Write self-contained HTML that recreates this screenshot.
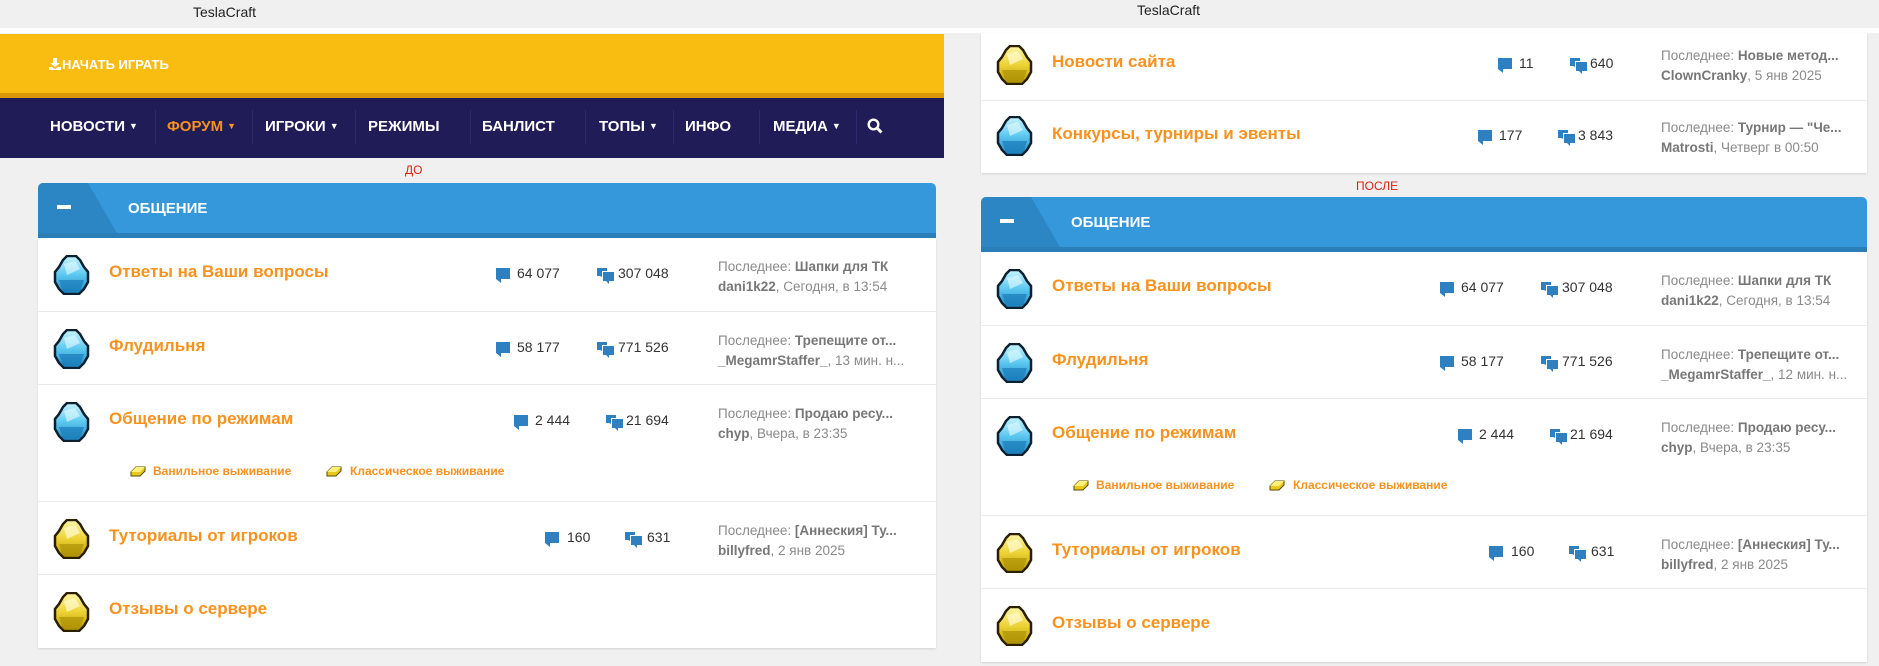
<!DOCTYPE html>
<html><head><meta charset="utf-8">
<style>
*{margin:0;padding:0;box-sizing:border-box}
body{width:1879px;height:666px;background:#f0f0f0;position:relative;overflow:hidden;font-family:"Liberation Sans",sans-serif}
.a{position:absolute}
.tc{font-size:14px;color:#222;top:4px}
.nav{left:0;top:98px;width:944px;height:60px;background:#201c58}
.ni{position:absolute;top:0;height:56px;display:flex;align-items:center;color:#fff;font-weight:bold;font-size:15px;white-space:nowrap}
.ni .c{font-size:9px;margin-left:4px}
.sep{position:absolute;top:12px;width:1px;height:34px;background:#2e2a6c}
.box{background:#fff;box-shadow:0 1px 2px rgba(0,0,0,.12)}
.row{position:absolute;left:0;right:0;border-bottom:1px solid #e9e9e9}
.row:last-child{border-bottom:none}
.gem{position:absolute;left:15px;top:17px}
.t{position:absolute;left:71px;top:24px;font-size:17px;font-weight:bold;color:#f7921e;white-space:nowrap}
.s{position:absolute;top:27px;font-size:14px;color:#333;white-space:nowrap}
.ic{position:absolute;top:30px}
.l{position:absolute;left:680px;top:19px;font-size:13.5px;color:#8a8a8a;line-height:20px;white-space:nowrap}
.l b{color:#777}
.hd{position:absolute;height:55px;background:#3598db;border-radius:5px 5px 0 0;overflow:hidden}
.hd .strip{position:absolute;left:0;right:0;bottom:0;height:5px;background:#2a7fb8}
.hd .tab{position:absolute;left:0;top:0}
.hd .mn{position:absolute;left:19px;top:22px;width:14px;height:4px;background:#fff}
.hd .nm{position:absolute;left:90px;top:17px;color:#fff;font-weight:bold;font-size:15px}
.sub{position:absolute;font-size:12px;font-weight:bold;color:#f7921e;white-space:nowrap}
.red{font-size:12px;color:#d21}
</style></head><body>
<svg width="0" height="0" style="position:absolute">
<defs>
<linearGradient id="gb" x1="0" y1="0" x2="0" y2="1"><stop offset="0" stop-color="#c8f4ff"/><stop offset=".5" stop-color="#5cc8f0"/><stop offset="1" stop-color="#1d86c4"/></linearGradient>
<linearGradient id="gy" x1="0" y1="0" x2="0" y2="1"><stop offset="0" stop-color="#fff7a8"/><stop offset=".5" stop-color="#ecd234"/><stop offset="1" stop-color="#b89a08"/></linearGradient>
<symbol id="gemb" viewBox="0 0 37 40"><polygon points="14,1 23,1 27,5 31,12 35,17 35,27 31,34 26,39 11,39 6,34 2,27 2,17 6,12 10,5" fill="url(#gb)" stroke="#0c2030" stroke-width="2.5"/><polygon points="6,25 31,25 27,37 10,37" fill="#1a7cb8" opacity=".7"/><polygon points="11,9 22,6 27,14 14,20" fill="#e6fbff" opacity=".6"/></symbol>
<symbol id="gemy" viewBox="0 0 37 40"><polygon points="14,1 23,1 27,5 31,12 35,17 35,27 31,34 26,39 11,39 6,34 2,27 2,17 6,12 10,5" fill="url(#gy)" stroke="#2a2000" stroke-width="2.5"/><polygon points="6,25 31,25 27,37 10,37" fill="#a88a00" opacity=".6"/><polygon points="11,9 22,6 27,14 14,20" fill="#fffbd0" opacity=".7"/></symbol>
<symbol id="c1" viewBox="0 0 14 15"><path d="M0 0H14V11H5V15L0 11Z" fill="#2f80c0"/></symbol>
<symbol id="c2" viewBox="0 0 17 16"><path d="M0 0H10V3H5V9L3 8H0Z" fill="#2f80c0"/><path d="M6 4H17V13H12V16L9 13H6Z" fill="#2f80c0"/></symbol>
<symbol id="ingot" viewBox="0 0 16 12"><polygon points="1,7 6,2 15,2 15,6 10,11 1,11" fill="#e8c81c" stroke="#5a4a00" stroke-width="1"/><polygon points="6,2 15,2 10,7 1,7" fill="#fff07a"/></symbol>
</defs></svg>

<div class="a tc" style="left:193px">TeslaCraft</div>
<div class="a tc" style="left:1137px;top:2px">TeslaCraft</div>
<div class="a" style="left:0;top:28px;width:1879px;height:5px;background:#fff"></div>

<!-- LEFT -->
<div class="a" style="left:0;top:34px;width:944px;height:59px;background:#f9bd12"></div>
<div class="a" style="left:0;top:93px;width:944px;height:5px;background:#d99808"></div>
<svg class="a" style="left:49px;top:58px" width="12" height="12" viewBox="0 0 12 12"><path d="M4 0H8V5H11L6 9L1 5H4Z M0 9H3L6 11L9 9H12V12H0Z" fill="#fff"/></svg>
<div class="a" style="left:62px;top:57px;color:#fff;font-weight:bold;font-size:13px">НАЧАТЬ ИГРАТЬ</div>
<div class="a nav">
<div class="ni" style="left:50px">НОВОСТИ<span class="c">▼</span></div><div class="sep" style="left:155px"></div>
<div class="ni" style="left:167px;color:#f7921e">ФОРУМ<span class="c">▼</span></div><div class="sep" style="left:252px"></div>
<div class="ni" style="left:265px">ИГРОКИ<span class="c">▼</span></div><div class="sep" style="left:355px"></div>
<div class="ni" style="left:368px">РЕЖИМЫ</div><div class="sep" style="left:470px"></div>
<div class="ni" style="left:482px">БАНЛИСТ</div><div class="sep" style="left:585px"></div>
<div class="ni" style="left:599px">ТОПЫ<span class="c">▼</span></div><div class="sep" style="left:673px"></div>
<div class="ni" style="left:685px">ИНФО</div><div class="sep" style="left:759px"></div>
<div class="ni" style="left:773px">МЕДИА<span class="c">▼</span></div><div class="sep" style="left:856px"></div>
<svg class="a" style="left:867px;top:20px" width="16" height="16" viewBox="0 0 16 16"><circle cx="6.5" cy="6.5" r="4.8" fill="none" stroke="#fff" stroke-width="2.4"/><path d="M10 10L14.5 14.5" stroke="#fff" stroke-width="3"/></svg>
</div>
<div class="a red" style="left:405px;top:163px">ДО</div>

<div class="hd" style="left:38px;top:183px;width:898px">
<svg class="tab" width="80" height="50"><polygon points="0,0 50,0 79,50 0,50" fill="#2d86c4"/></svg>
<div class="strip"></div><div class="mn"></div><div class="nm">ОБЩЕНИЕ</div>
</div>
<div class="a box" style="left:38px;top:238px;width:898px;height:410px">
<div class="row" style="top:0;height:74px"><svg class="gem" width="37" height="40"><use href="#gemb"/></svg><div class="t">Ответы на Ваши вопросы</div>
<svg class="ic" style="left:458px" width="14" height="15"><use href="#c1"/></svg><div class="s" style="left:479px">64 077</div>
<svg class="ic" style="left:559px" width="17" height="16"><use href="#c2"/></svg><div class="s" style="left:580px">307 048</div>
<div class="l">Последнее: <b>Шапки для ТК</b><br><b>dani1k22</b>, Сегодня, в 13:54</div></div>
<div class="row" style="top:74px;height:73px"><svg class="gem" width="37" height="40"><use href="#gemb"/></svg><div class="t">Флудильня</div>
<svg class="ic" style="left:458px" width="14" height="15"><use href="#c1"/></svg><div class="s" style="left:479px">58 177</div>
<svg class="ic" style="left:559px" width="17" height="16"><use href="#c2"/></svg><div class="s" style="left:580px">771 526</div>
<div class="l">Последнее: <b>Трепещите от...</b><br><b>_MegamrStaffer_</b>, 13 мин. н...</div></div>
<div class="row" style="top:147px;height:117px"><svg class="gem" width="37" height="40"><use href="#gemb"/></svg><div class="t">Общение по режимам</div>
<svg class="ic" style="left:476px" width="14" height="15"><use href="#c1"/></svg><div class="s" style="left:497px">2 444</div>
<svg class="ic" style="left:568px" width="17" height="16"><use href="#c2"/></svg><div class="s" style="left:588px">21 694</div>
<div class="l">Последнее: <b>Продаю ресу...</b><br><b>chyp</b>, Вчера, в 23:35</div>
<svg class="a" style="left:92px;top:80px" width="16" height="12"><use href="#ingot"/></svg><div class="sub" style="left:115px;top:79px">Ванильное выживание</div>
<svg class="a" style="left:288px;top:80px" width="16" height="12"><use href="#ingot"/></svg><div class="sub" style="left:312px;top:79px">Классическое выживание</div></div>
<div class="row" style="top:264px;height:73px"><svg class="gem" width="37" height="40"><use href="#gemy"/></svg><div class="t">Туториалы от игроков</div>
<svg class="ic" style="left:507px" width="14" height="15"><use href="#c1"/></svg><div class="s" style="left:529px">160</div>
<svg class="ic" style="left:587px" width="17" height="16"><use href="#c2"/></svg><div class="s" style="left:609px">631</div>
<div class="l">Последнее: <b>[Аннеския] Ту...</b><br><b>billyfred</b>, 2 янв 2025</div></div>
<div class="row" style="top:337px;height:73px"><svg class="gem" width="37" height="40"><use href="#gemy"/></svg><div class="t">Отзывы о сервере</div></div>
</div>

<!-- RIGHT -->
<div class="a box" style="left:981px;top:33px;width:886px;height:140px">
<div class="row" style="top:0;height:68px"><svg class="gem" style="top:12px" width="37" height="40"><use href="#gemy"/></svg><div class="t" style="top:19px">Новости сайта</div>
<svg class="ic" style="left:517px;top:25px" width="14" height="15"><use href="#c1"/></svg><div class="s" style="left:538px;top:22px">11</div>
<svg class="ic" style="left:589px;top:25px" width="17" height="16"><use href="#c2"/></svg><div class="s" style="left:609px;top:22px">640</div>
<div class="l" style="top:13px">Последнее: <b>Новые метод...</b><br><b>ClownCranky</b>, 5 янв 2025</div></div>
<div class="row" style="top:68px;height:72px"><svg class="gem" style="top:15px" width="37" height="40"><use href="#gemb"/></svg><div class="t" style="top:23px">Конкурсы, турниры и эвенты</div>
<svg class="ic" style="left:497px;top:29px" width="14" height="15"><use href="#c1"/></svg><div class="s" style="left:518px;top:26px">177</div>
<svg class="ic" style="left:577px;top:29px" width="17" height="16"><use href="#c2"/></svg><div class="s" style="left:597px;top:26px">3 843</div>
<div class="l" style="top:17px">Последнее: <b>Турнир — "Че...</b><br><b>Matrosti</b>, Четверг в 00:50</div></div>
</div>
<div class="a red" style="left:1356px;top:179px">ПОСЛЕ</div>

<div class="hd" style="left:981px;top:197px;width:886px">
<svg class="tab" width="80" height="50"><polygon points="0,0 50,0 79,50 0,50" fill="#2d86c4"/></svg>
<div class="strip"></div><div class="mn"></div><div class="nm">ОБЩЕНИЕ</div>
</div>
<div class="a box" style="left:981px;top:252px;width:886px;height:410px">
<div class="row" style="top:0;height:74px"><svg class="gem" width="37" height="40"><use href="#gemb"/></svg><div class="t">Ответы на Ваши вопросы</div>
<svg class="ic" style="left:459px" width="14" height="15"><use href="#c1"/></svg><div class="s" style="left:480px">64 077</div>
<svg class="ic" style="left:560px" width="17" height="16"><use href="#c2"/></svg><div class="s" style="left:581px">307 048</div>
<div class="l">Последнее: <b>Шапки для ТК</b><br><b>dani1k22</b>, Сегодня, в 13:54</div></div>
<div class="row" style="top:74px;height:73px"><svg class="gem" width="37" height="40"><use href="#gemb"/></svg><div class="t">Флудильня</div>
<svg class="ic" style="left:459px" width="14" height="15"><use href="#c1"/></svg><div class="s" style="left:480px">58 177</div>
<svg class="ic" style="left:560px" width="17" height="16"><use href="#c2"/></svg><div class="s" style="left:581px">771 526</div>
<div class="l">Последнее: <b>Трепещите от...</b><br><b>_MegamrStaffer_</b>, 12 мин. н...</div></div>
<div class="row" style="top:147px;height:117px"><svg class="gem" width="37" height="40"><use href="#gemb"/></svg><div class="t">Общение по режимам</div>
<svg class="ic" style="left:477px" width="14" height="15"><use href="#c1"/></svg><div class="s" style="left:498px">2 444</div>
<svg class="ic" style="left:569px" width="17" height="16"><use href="#c2"/></svg><div class="s" style="left:589px">21 694</div>
<div class="l">Последнее: <b>Продаю ресу...</b><br><b>chyp</b>, Вчера, в 23:35</div>
<svg class="a" style="left:92px;top:80px" width="16" height="12"><use href="#ingot"/></svg><div class="sub" style="left:115px;top:79px">Ванильное выживание</div>
<svg class="a" style="left:288px;top:80px" width="16" height="12"><use href="#ingot"/></svg><div class="sub" style="left:312px;top:79px">Классическое выживание</div></div>
<div class="row" style="top:264px;height:73px"><svg class="gem" width="37" height="40"><use href="#gemy"/></svg><div class="t">Туториалы от игроков</div>
<svg class="ic" style="left:508px" width="14" height="15"><use href="#c1"/></svg><div class="s" style="left:530px">160</div>
<svg class="ic" style="left:588px" width="17" height="16"><use href="#c2"/></svg><div class="s" style="left:610px">631</div>
<div class="l">Последнее: <b>[Аннеския] Ту...</b><br><b>billyfred</b>, 2 янв 2025</div></div>
<div class="row" style="top:337px;height:73px"><svg class="gem" width="37" height="40"><use href="#gemy"/></svg><div class="t">Отзывы о сервере</div></div>
</div>
</body></html>
